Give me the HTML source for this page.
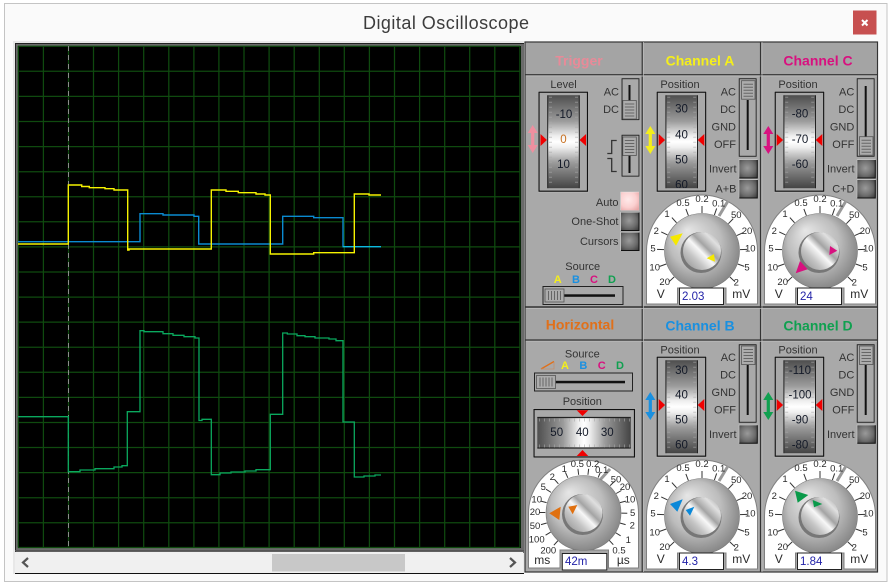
<!DOCTYPE html>
<html><head><meta charset="utf-8"><title>Digital Oscilloscope</title>
<style>
html,body{margin:0;padding:0;background:#fff;width:892px;height:586px;overflow:hidden}
svg{display:block}
#root{filter:blur(.35px)}
text{font-family:"Liberation Sans",sans-serif;fill:#333;font-size:11px}
.t{font-weight:bold;font-size:14px;text-anchor:middle}
.m{text-anchor:middle}
.r{text-anchor:end}
.d{font-size:11.5px;text-anchor:middle;fill:#141a28}
.s{font-size:9.5px;text-anchor:middle;dominant-baseline:middle;fill:#2a2a2a}
.u{font-size:12px;text-anchor:middle;dominant-baseline:middle;fill:#2a2a2a}
.v{font-size:11.5px;fill:#2222a8}
.c{font-weight:bold;font-size:11px;text-anchor:middle}
</style></head><body>
<svg id="root" width="892" height="586" viewBox="0 0 892 586" xmlns="http://www.w3.org/2000/svg">
<defs>
<linearGradient id="gv" x1="0" y1="0" x2="0" y2="1"><stop offset="0" stop-color="#4e4e4e"/><stop offset=".28" stop-color="#9c9c9c"/><stop offset=".44" stop-color="#efefef"/><stop offset=".5" stop-color="#fff"/><stop offset=".56" stop-color="#efefef"/><stop offset=".72" stop-color="#9c9c9c"/><stop offset="1" stop-color="#444"/></linearGradient>
<linearGradient id="gh" x1="0" y1="0" x2="1" y2="0"><stop offset="0" stop-color="#4e4e4e"/><stop offset=".28" stop-color="#9c9c9c"/><stop offset=".44" stop-color="#efefef"/><stop offset=".5" stop-color="#fff"/><stop offset=".56" stop-color="#efefef"/><stop offset=".72" stop-color="#9c9c9c"/><stop offset="1" stop-color="#444"/></linearGradient>
<radialGradient id="kn" cx=".5" cy=".5" r=".62" fx=".3" fy=".22"><stop offset="0" stop-color="#e6e6e6"/><stop offset=".55" stop-color="#bdbdbd"/><stop offset="1" stop-color="#727272"/></radialGradient>
<linearGradient id="hub" x1="0" y1="1" x2="1" y2="0"><stop offset="0" stop-color="#8a8a8a"/><stop offset=".3" stop-color="#c4c4c4"/><stop offset=".48" stop-color="#f8f8f8"/><stop offset=".6" stop-color="#a4a4a4"/><stop offset=".78" stop-color="#e0e0e0"/><stop offset="1" stop-color="#969696"/></linearGradient>
<radialGradient id="btn" cx=".45" cy=".45" r=".75"><stop offset="0" stop-color="#9a9a9a"/><stop offset=".55" stop-color="#6e6e6e"/><stop offset="1" stop-color="#383838"/></radialGradient>
<radialGradient id="btnp" cx=".4" cy=".4" r=".75"><stop offset="0" stop-color="#ffeaea"/><stop offset=".6" stop-color="#fbd0d0"/><stop offset="1" stop-color="#e8a8a8"/></radialGradient>

<g id="drum">
<rect x="-.5" y="-.5" width="50.5" height="101" fill="#cfcfcf"/>
<rect x=".5" y=".5" width="48.5" height="99" fill="#a9a9a9" stroke="#111" stroke-width="1.200"/>
<rect x="9.500" y="3.500" width="31" height="93" fill="url(#gv)"/>
<path d="M9.200 3.500V96.500M40.800 3.500V96.500" stroke="#222" stroke-width="1"/>
<line x1="12" y1="5" x2="12" y2="95" stroke="#aaa" stroke-width="3" stroke-dasharray="1 4" opacity=".6"/>
<line x1="38" y1="5" x2="38" y2="95" stroke="#aaa" stroke-width="3" stroke-dasharray="1 4" opacity=".6"/>
<polygon points="2,42.300 8.400,48.300 2,54.300" fill="#f00000"/>
<polygon points="47.600,42.300 41,48.300 47.600,54.300" fill="#f00000"/>
</g>

<g id="ridge">
<rect x="0" y="0" width="13.500" height="18.500" fill="#acacac" stroke="#555" stroke-width=".8"/>
<path d="M2 3.500H11.500M2 6.500H11.500M2 9.500H11.500M2 12.500H11.500M2 15.500H11.500" stroke="#666" stroke-width="1"/>
</g>
<g id="ridgeh">
<rect x="0" y="0" width="19" height="13" fill="#acacac" stroke="#555" stroke-width=".8"/>
<path d="M3.500 2V11M6.500 2V11M9.500 2V11M12.500 2V11M15.500 2V11" stroke="#666" stroke-width="1"/>
</g>
<g id="vframe">
<rect x="-.5" y="-.5" width="18.500" height="79" fill="#d0d0d0"/>
<rect x=".2" y=".2" width="17" height="77.600" fill="#a9a9a9" stroke="#222" stroke-width="1"/>
</g>
<g id="vframes">
<rect x="-.5" y="-.5" width="18.500" height="42.500" fill="#d0d0d0"/>
<rect x=".2" y=".2" width="17" height="41" fill="#a9a9a9" stroke="#222" stroke-width="1"/>
</g>
<g id="b">
<rect x="-.5" y="-.5" width="18.500" height="18.500" fill="#d8d8d8"/>
<rect x="0" y="0" width="18" height="18" fill="url(#btn)"/>
<path d="M18 0V18H0" fill="none" stroke="#111" stroke-width="1"/>
</g>

<g id="ticks" stroke="#333" stroke-width="1">
<line y1="-38" y2="-45" transform="rotate(19)"/><line y1="-38" y2="-45"/><line y1="-38" y2="-45" transform="rotate(-21)"/><line y1="-38" y2="-45" transform="rotate(-42)"/><line y1="-38" y2="-45" transform="rotate(-65)"/><line y1="-38" y2="-45" transform="rotate(-88)"/><line y1="-38" y2="-45" transform="rotate(-110)"/><line y1="-38" y2="-45" transform="rotate(-133)"/><line y1="-38" y2="-45" transform="rotate(44)"/><line y1="-38" y2="-45" transform="rotate(66)"/><line y1="-38" y2="-45" transform="rotate(88)"/><line y1="-38" y2="-45" transform="rotate(110)"/><line y1="-38" y2="-45" transform="rotate(133)"/>
</g>
<g id="knob">
<circle r="37.500" fill="url(#kn)" stroke="#777" stroke-width=".6"/>
<circle cx="-1" cy="1.500" r="20.500" fill="#777"/>
<circle r="19" fill="url(#hub)"/>
</g>
<g id="dial">
<path d="M-55.500 53V0A55.500 56 0 0 1 55.500 0V53H24V37H-24.500V53Z" fill="#fff" stroke="#808080" stroke-width="1"/>
<use href="#ticks"/>
<line x1="26" y1="-50" x2="17" y2="-35" stroke="#999" stroke-width="3"/>
<use href="#knob"/>
<rect x="-22.500" y="37" width="44" height="16.500" fill="#fff" stroke="#222" stroke-width="1"/>
</g>
<g id="dt" stroke="#333" stroke-width="1">
<line y1="-38" y2="-44" transform="rotate(23)"/><line y1="-38" y2="-44" transform="rotate(7)"/><line y1="-38" y2="-44" transform="rotate(-7)"/><line y1="-38" y2="-44" transform="rotate(-24)"/><line y1="-38" y2="-44" transform="rotate(-41)"/><line y1="-38" y2="-44" transform="rotate(-58)"/><line y1="-38" y2="-44" transform="rotate(-75)"/><line y1="-38" y2="-44" transform="rotate(-90)"/><line y1="-38" y2="-44" transform="rotate(-106)"/><line y1="-38" y2="-44" transform="rotate(-121)"/><line y1="-38" y2="-44" transform="rotate(-138)"/><line y1="-38" y2="-44" transform="rotate(45)"/><line y1="-38" y2="-44" transform="rotate(60)"/><line y1="-38" y2="-44" transform="rotate(75)"/><line y1="-38" y2="-44" transform="rotate(91)"/><line y1="-38" y2="-44" transform="rotate(106)"/><line y1="-38" y2="-44" transform="rotate(122)"/><line y1="-38" y2="-44" transform="rotate(137)"/>
</g>
<path id="arr" d="M0 -14L-5 -6H-1.600V6H-5L0 14L5 6H1.600V-6H5Z"/>
</defs>

<!-- window -->
<rect x="4.500" y="3.500" width="882.500" height="578" fill="#fafafa" stroke="#c4c4c4" stroke-width="1"/>
<text x="446" y="29" style="font-size:18px;fill:#3c3c3c;text-anchor:middle" textLength="166">Digital Oscilloscope</text>
<rect x="853" y="10.500" width="23.500" height="24" fill="#c75050"/>
<path d="M862 20L867.500 25.500M867.500 20L862 25.500" stroke="#fff" stroke-width="2"/>

<!-- scope frame -->
<rect x="13" y="41" width="511" height="533" fill="#e8e8e8"/>
<rect x="15" y="43" width="509" height="510" fill="#6a6a6a"/>
<rect x="15" y="43" width="509" height="1" fill="#222"/>
<rect x="15" y="43" width="1" height="510" fill="#222"/>
<rect x="18" y="46" width="503" height="502" fill="#000"/>
<g stroke="#0f4a0f" stroke-width="1.250">
<path d="M18.300 46V547.500M43.400 46V547.500M68.500 46V547.500M93.500 46V547.500M118.600 46V547.500M143.700 46V547.500M168.800 46V547.500M193.900 46V547.500M218.900 46V547.500M244 46V547.500M269.100 46V547.500M294.200 46V547.500M319.300 46V547.500M344.300 46V547.500M369.400 46V547.500M394.500 46V547.500M419.600 46V547.500M444.700 46V547.500M469.700 46V547.500M494.800 46V547.500M519.900 46V547.500"/>
<path d="M18 46.300H520M18 71.300H520M18 96.400H520M18 121.500H520M18 146.600H520M18 171.700H520M18 196.700H520M18 221.800H520M18 246.900H520M18 272H520M18 297.100H520M18 322.100H520M18 347.200H520M18 372.300H520M18 397.400H520M18 422.500H520M18 447.500H520M18 472.600H520M18 497.700H520M18 522.800H520M18 547.500H520"/>
</g>
<line x1="68.500" y1="46" x2="68.500" y2="547" stroke="#8c8c8c" stroke-width="1" stroke-dasharray="5 4"/>

<!-- traces -->
<path d="M18 416.700H68.300V471.700H80V470H95V468.700H114V467H122V465.700H127.300V411.700H140V330.700H144V331.700H163V333.700H173V335.300H184V336.700H195V338H199V420.500H202V419.300H211.300V474.700H220V473H231V472H245V471H256V469.700H270.300V414.300H282.700V333H287.300V334H297V335.700H305V336.700H315V338H329V339H336V340.700H343V422H354.300V477H364V476H375V475H381" fill="none" stroke="#0aa85e" stroke-width="1.300"/>
<path d="M18 241.700H140V213.700H163V215H194V216.300H198.700V244H282.700V216.300H313.700V217.700H343V246.700H381" fill="none" stroke="#0a8ad0" stroke-width="1.400"/>
<path d="M343 246.700H381" fill="none" stroke="#0cc0e0" stroke-width="1.200"/>
<path d="M18 244H68.300V185H81.700V186.500H89.300V187.700H105V188.700H114V190H127.700V250H129V249H211.300V190H226V191.300H238.300V192.700H256V194H265V195H270.300V254H313.700V252.700H354.300V194H369V195H381" fill="none" stroke="#f6f200" stroke-width="1.400"/>

<!-- scrollbar -->
<rect x="15" y="550" width="509" height="1.500" fill="#555"/>
<rect x="15" y="552" width="508" height="21" fill="#f0f0f0"/>
<rect x="272" y="554" width="133" height="17.500" fill="#c8c8c8"/>
<rect x="15" y="573" width="509" height="1" fill="#111"/>
<path d="M28 558L23 562.500L28 567M510 558L515 562.500L510 567" fill="none" stroke="#555" stroke-width="2.200"/>

<!-- panels -->
<rect x="524.500" y="42" width="353" height="530" fill="#a9a9a9"/>
<rect x="526" y="43" width="115" height="31" fill="#a4a4a4"/>
<rect x="644" y="43" width="115" height="31" fill="#a4a4a4"/>
<rect x="762" y="43" width="114" height="31" fill="#a4a4a4"/>
<rect x="526" y="309" width="115" height="30" fill="#a4a4a4"/>
<rect x="644" y="309" width="115" height="30" fill="#a4a4a4"/>
<rect x="762" y="309" width="114" height="30" fill="#a4a4a4"/>
<g stroke="#333" stroke-width="1.200" fill="none">
<rect x="525" y="42" width="352.500" height="530"/>
<path d="M642.200 42V572M760.500 42V572M525 74.700H877.500M525 340H877.500"/>
</g>
<path d="M525 307H877.500" stroke="#333" stroke-width="1.600"/>
<path d="M643.500 42V572M762 42V572M526 76H877M526 341.300H877M526 308.500H877" stroke="#bcbcbc" stroke-width=".7"/>

<!-- titles -->
<text class="t" x="579" y="65.500" style="fill:#e88a98">Trigger</text>
<text class="t" x="700" y="65.500" style="fill:#f5ef1a">Channel A</text>
<text class="t" x="818" y="65.500" style="fill:#d8107f">Channel C</text>
<text class="t" x="580" y="329.500" style="fill:#e0701a">Horizontal</text>
<text class="t" x="700" y="330.500" style="fill:#1a90e0">Channel B</text>
<text class="t" x="818" y="330.500" style="fill:#10a050">Channel D</text>

<!-- Trigger -->
<text class="m" x="563.500" y="88">Level</text>
<use href="#drum" x="538.500" y="91.700"/>
<text class="d" x="564" y="118">-10</text><text class="d" x="563.500" y="143" style="fill:#c87020">0</text><text class="d" x="563.500" y="168">10</text>
<use href="#arr" x="532.700" y="139" fill="#ee8f9f"/>
<text class="r" x="619" y="95.700">AC</text><text class="r" x="619" y="113">DC</text>
<use href="#vframes" x="621.800" y="78.500"/>
<rect x="628.500" y="85" width="2" height="17" fill="#111"/>
<use href="#ridge" x="622.800" y="100.500"/>
<use href="#vframes" x="621.800" y="135"/>
<rect x="628.500" y="155" width="2" height="18" fill="#111"/>
<use href="#ridge" x="622.800" y="137"/>
<path d="M616.700 140.500H611.700V153.500H607.300M607.300 158.500H611.700V171.500H616.700" fill="none" stroke="#333" stroke-width="1.300"/>
<text class="r" x="618.500" y="206">Auto</text><text class="r" x="618.500" y="225">One-Shot</text><text class="r" x="618.500" y="245">Cursors</text>
<rect x="620.500" y="191.800" width="18.500" height="18.500" fill="#e8e8e8"/>
<rect x="621" y="192.300" width="18" height="18" fill="url(#btnp)"/>
<use href="#b" x="621" y="212.500"/><use href="#b" x="621" y="232.500"/>
<text class="m" x="582.700" y="270">Source</text>
<text class="c" x="557.700" y="283" style="fill:#f5ef1a">A</text><text class="c" x="576" y="283" style="fill:#1a90e0">B</text><text class="c" x="594" y="283" style="fill:#d8107f">C</text><text class="c" x="612" y="283" style="fill:#10a050">D</text>
<rect x="543" y="286.500" width="80" height="18" fill="#a9a9a9" stroke="#222" stroke-width="1"/>
<rect x="564" y="294.300" width="51" height="2.500" fill="#111"/>
<use href="#ridgeh" x="545" y="289"/>

<!-- Channel A -->
<text class="m" x="680" y="88">Position</text>
<use href="#drum" x="656.700" y="91.700"/>
<text class="d" x="681.500" y="112.500">30</text><text class="d" x="681.500" y="138.500">40</text><text class="d" x="681.500" y="163.500">50</text>
<svg x="666" y="95" width="32" height="93" overflow="hidden"><text class="d" x="15.500" y="93.500">60</text></svg>
<use href="#arr" x="650.300" y="140" fill="#f5ef1a"/>
<text class="r" x="736" y="95.700">AC</text><text class="r" x="736" y="113">DC</text><text class="r" x="736" y="130.700">GND</text><text class="r" x="736" y="148">OFF</text>
<use href="#vframe" x="739" y="78.500"/><rect x="746.700" y="100" width="2" height="50" fill="#111"/><use href="#ridge" x="741.500" y="80.700"/>
<text class="r" x="736.500" y="172.500">Invert</text><use href="#b" x="739.300" y="160"/>
<text class="r" x="736.500" y="192.500">A+B</text><use href="#b" x="739.300" y="180"/>
<use href="#dial" x="702" y="251"/>
<g transform="translate(702 253)">
<text class="s" x="16.700" y="-49">0.1</text><text class="s" x="0" y="-53.300">0.2</text><text class="s" x="-19" y="-49.300">0.5</text><text class="s" x="-35" y="-38.300">1</text><text class="s" x="-45.700" y="-21.700">2</text><text class="s" x="-49" y="-4">5</text><text class="s" x="-47.300" y="15">10</text><text class="s" x="-37.300" y="29.300">20</text><text class="u" x="-41.300" y="42">V</text><text class="s" x="34.300" y="-37.700">50</text><text class="s" x="45" y="-21.700">20</text><text class="s" x="48.300" y="-4">10</text><text class="s" x="45" y="15">5</text><text class="s" x="34.300" y="30">2</text><text class="u" x="39.300" y="42">mV</text>
</g>
<text class="v" x="682" y="300">2.03</text>
<polygon points="670,236.700 682.700,233.300 676,245.700" fill="#f5e800"/><polygon points="706.700,258.300 714,254 715,261.700" fill="#f5e800"/>

<!-- Channel C -->
<text class="m" x="798" y="88">Position</text>
<use href="#drum" x="774.700" y="91.700"/>
<text class="d" x="800" y="117.500">-80</text><text class="d" x="800" y="143">-70</text><text class="d" x="800" y="168">-60</text>
<use href="#arr" x="768.300" y="140" fill="#d8107f"/>
<text class="r" x="854.300" y="95.700">AC</text><text class="r" x="854.300" y="113">DC</text><text class="r" x="854.300" y="130.700">GND</text><text class="r" x="854.300" y="148">OFF</text>
<use href="#vframe" x="857" y="78.500"/><rect x="864.700" y="86" width="2" height="51" fill="#111"/><use href="#ridge" x="859.500" y="136.700"/>
<text class="r" x="854.500" y="172.500">Invert</text><use href="#b" x="857.300" y="160"/>
<text class="r" x="854.500" y="192.500">C+D</text><use href="#b" x="857.300" y="180"/>
<use href="#dial" x="820" y="251"/>
<g transform="translate(820 253)">
<text class="s" x="16.700" y="-49">0.1</text><text class="s" x="0" y="-53.300">0.2</text><text class="s" x="-19" y="-49.300">0.5</text><text class="s" x="-35" y="-38.300">1</text><text class="s" x="-45.700" y="-21.700">2</text><text class="s" x="-49" y="-4">5</text><text class="s" x="-47.300" y="15">10</text><text class="s" x="-37.300" y="29.300">20</text><text class="u" x="-41.300" y="42">V</text><text class="s" x="34.300" y="-37.700">50</text><text class="s" x="45" y="-21.700">20</text><text class="s" x="48.300" y="-4">10</text><text class="s" x="45" y="15">5</text><text class="s" x="34.300" y="30">2</text><text class="u" x="39.300" y="42">mV</text>
</g>
<text class="v" x="800" y="300">24</text>
<polygon points="795.700,273.300 800,261 807.700,269.300" fill="#d8107f"/><polygon points="829.300,255 830,246 837.300,250.700" fill="#d8107f"/>

<!-- Horizontal -->
<text class="m" x="582.300" y="357.500">Source</text>
<path d="M541 369L554 361.500" fill="none" stroke="#e0701a" stroke-width="1.300"/>
<path d="M541 369H554V362" fill="none" stroke="#c09070" stroke-width=".8"/>
<text class="c" x="565" y="369" style="fill:#f5ef1a">A</text><text class="c" x="583.300" y="369" style="fill:#1a90e0">B</text><text class="c" x="601.700" y="369" style="fill:#d8107f">C</text><text class="c" x="620" y="369" style="fill:#10a050">D</text>
<rect x="534.500" y="373" width="98" height="18" fill="#a9a9a9" stroke="#222" stroke-width="1"/>
<rect x="555" y="380.800" width="70" height="2.500" fill="#111"/>
<use href="#ridgeh" x="536.500" y="375.500"/>
<text class="m" x="582.300" y="405">Position</text>
<rect x="533" y="408.500" width="102.500" height="49.500" fill="#cfcfcf"/>
<rect x="534" y="409.500" width="100.500" height="47.500" fill="#a9a9a9" stroke="#111" stroke-width="1.200"/>
<rect x="537.300" y="417.700" width="93.500" height="30" fill="url(#gh)"/>
<path d="M537.300 417.500H630.800M537.300 448H630.800" stroke="#222" stroke-width="1.200"/>
<line x1="539" y1="420" x2="630" y2="420" stroke="#aaa" stroke-width="3" stroke-dasharray="1 4" opacity=".6"/>
<line x1="539" y1="446" x2="630" y2="446" stroke="#aaa" stroke-width="3" stroke-dasharray="1 4" opacity=".6"/>
<polygon points="576.700,410.200 588.300,410.200 582.500,416" fill="#f00000"/><polygon points="576.700,456 588.300,456 582.500,450" fill="#f00000"/>
<text class="d" x="556.700" y="436">50</text><text class="d" x="582.300" y="436">40</text><text class="d" x="607.300" y="436">30</text>
<path d="M528.500 568V513A55 53 0 0 1 638.500 513V568H608.500V550H560V568Z" fill="#fff" stroke="#808080" stroke-width="1"/>
<use href="#dt" x="583.300" y="512.500"/>
<line x1="610" y1="469" x2="600" y2="480" stroke="#999" stroke-width="3"/>
<use href="#knob" x="583.500" y="513"/>
<rect x="562.300" y="553.500" width="44.500" height="16.500" fill="#fff" stroke="#222" stroke-width="1"/>
<g transform="translate(520 305)">
<text class="s" x="81.700" y="165.700">0.1</text><text class="s" x="72.700" y="159.300">0.2</text><text class="s" x="57.300" y="159.300">0.5</text><text class="s" x="44.300" y="164.300">1</text><text class="s" x="32.300" y="172.300">2</text><text class="s" x="23.300" y="182.300">5</text><text class="s" x="16.700" y="195">10</text><text class="s" x="15" y="207.300">20</text><text class="s" x="15" y="221.700">50</text><text class="s" x="16.700" y="235">100</text><text class="s" x="28.300" y="246">200</text><text class="u" x="22.300" y="256">ms</text><text class="s" x="96" y="175">50</text><text class="s" x="105" y="182.300">20</text><text class="s" x="110" y="195">10</text><text class="s" x="112.700" y="208.300">5</text><text class="s" x="112.300" y="221">2</text><text class="s" x="108.300" y="235.700">1</text><text class="s" x="99" y="246">0.5</text><text class="u" x="103.300" y="256">µs</text>
</g>
<text class="v" x="565" y="565">42m</text>
<polygon points="549.300,513.300 560.700,506.700 559.300,520" fill="#e07010"/><polygon points="568.300,506.700 577.300,505 572.700,514.300" fill="#e07010"/>

<!-- Channel B -->
<text class="m" x="680" y="353.500">Position</text>
<use href="#drum" x="656.700" y="356.700"/>
<text class="d" x="681.500" y="374">30</text><text class="d" x="681.500" y="398.500">40</text><text class="d" x="681.500" y="423.500">50</text><text class="d" x="681.500" y="448.500">60</text>
<use href="#arr" x="650.300" y="406" fill="#1a90e0"/>
<text class="r" x="736" y="361">AC</text><text class="r" x="736" y="378.300">DC</text><text class="r" x="736" y="396">GND</text><text class="r" x="736" y="413.300">OFF</text>
<use href="#vframe" x="739" y="344.500"/><rect x="746.700" y="365" width="2" height="50" fill="#111"/><use href="#ridge" x="741.500" y="346"/>
<text class="r" x="736.500" y="438">Invert</text><use href="#b" x="739.300" y="425.300"/>
<use href="#dial" x="702" y="516"/>
<g transform="translate(702 518)">
<text class="s" x="16.700" y="-49">0.1</text><text class="s" x="0" y="-53.300">0.2</text><text class="s" x="-19" y="-49.300">0.5</text><text class="s" x="-35" y="-38.300">1</text><text class="s" x="-45.700" y="-21.700">2</text><text class="s" x="-49" y="-4">5</text><text class="s" x="-47.300" y="15">10</text><text class="s" x="-37.300" y="29.300">20</text><text class="u" x="-41.300" y="42">V</text><text class="s" x="34.300" y="-37.700">50</text><text class="s" x="45" y="-21.700">20</text><text class="s" x="48.300" y="-4">10</text><text class="s" x="45" y="15">5</text><text class="s" x="34.300" y="30">2</text><text class="u" x="39.300" y="42">mV</text>
</g>
<text class="v" x="682" y="565">4.3</text>
<polygon points="670,504 682.700,499.300 677.300,511.700" fill="#0a88d8"/><polygon points="685.700,510 694.300,506.700 690,515.700" fill="#0a88d8"/>

<!-- Channel D -->
<text class="m" x="798" y="353.500">Position</text>
<use href="#drum" x="774.700" y="356.700"/>
<text class="d" x="800" y="374">-110</text><text class="d" x="800" y="398.500">-100</text><text class="d" x="800" y="423.500">-90</text><text class="d" x="800" y="448.500">-80</text>
<use href="#arr" x="768.300" y="406" fill="#10a050"/>
<text class="r" x="854.300" y="361">AC</text><text class="r" x="854.300" y="378.300">DC</text><text class="r" x="854.300" y="396">GND</text><text class="r" x="854.300" y="413.300">OFF</text>
<use href="#vframe" x="857" y="344.500"/><rect x="864.700" y="365" width="2" height="50" fill="#111"/><use href="#ridge" x="859.500" y="346"/>
<text class="r" x="854.500" y="438">Invert</text><use href="#b" x="857.300" y="425.300"/>
<use href="#dial" x="820" y="516"/>
<g transform="translate(820 518)">
<text class="s" x="16.700" y="-49">0.1</text><text class="s" x="0" y="-53.300">0.2</text><text class="s" x="-19" y="-49.300">0.5</text><text class="s" x="-35" y="-38.300">1</text><text class="s" x="-45.700" y="-21.700">2</text><text class="s" x="-49" y="-4">5</text><text class="s" x="-47.300" y="15">10</text><text class="s" x="-37.300" y="29.300">20</text><text class="u" x="-41.300" y="42">V</text><text class="s" x="34.300" y="-37.700">50</text><text class="s" x="45" y="-21.700">20</text><text class="s" x="48.300" y="-4">10</text><text class="s" x="45" y="15">5</text><text class="s" x="34.300" y="30">2</text><text class="u" x="39.300" y="42">mV</text>
</g>
<text class="v" x="800" y="565">1.84</text>
<polygon points="795,490.700 808.300,495 797.700,502.700" fill="#0a9a4a"/><polygon points="812.700,500 822.300,504 814,507.300" fill="#0a9a4a"/>
</svg>
</body></html>
